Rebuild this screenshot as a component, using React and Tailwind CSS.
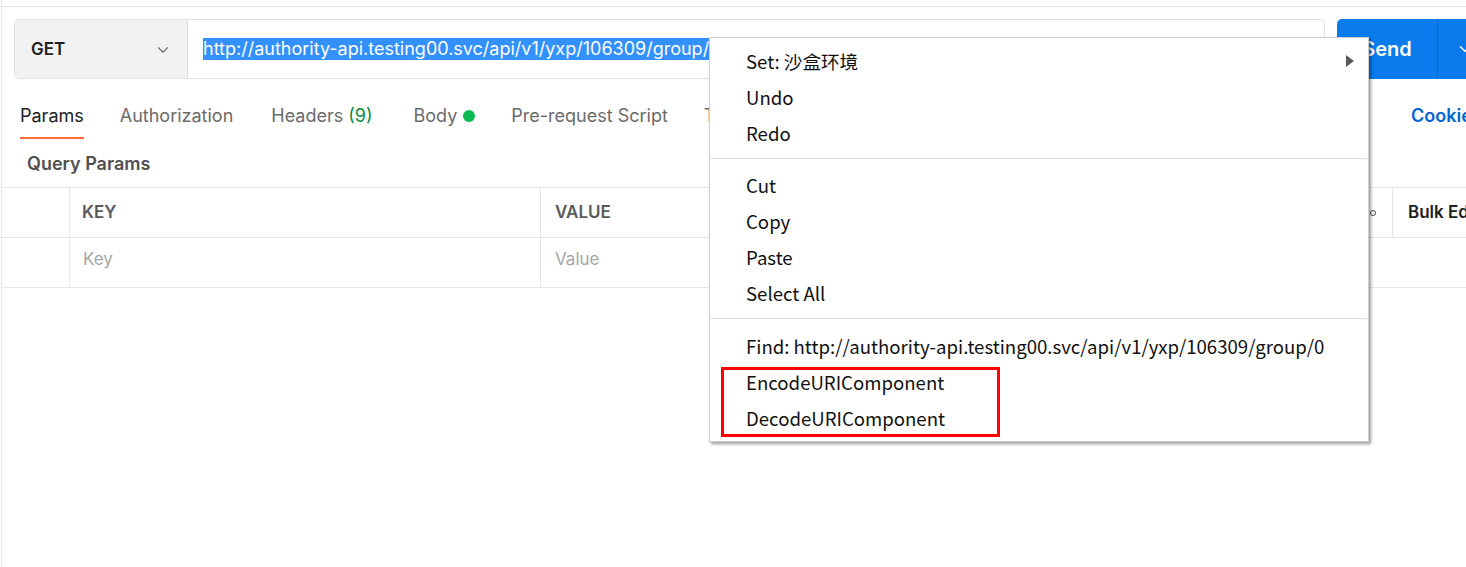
import React from 'react';
import { ChevronDown } from 'lucide-react';

const url = 'http://authority-api.testing00.svc/api/v1/yxp/106309/group/0';

const tabs = [
  { label: 'Params', active: true },
  { label: 'Authorization' },
  { label: 'Headers', count: '(9)', extra: 'ml-[2px]' },
  { label: 'Body', dot: true, extra: 'ml-[5px]' },
  { label: 'Pre-request Script' },
  { label: 'Tests' },
];

const menuGroups = [
  ['Set: 沙盒环境', 'Undo', 'Redo'],
  ['Cut', 'Copy', 'Paste', 'Select All'],
  ['Find: ' + url, 'EncodeURIComponent', 'DecodeURIComponent'],
];

const ContextMenu = () => (
  <div className="absolute left-[709px] top-[37px] w-[660px] bg-white border border-[#cfcfcf] shadow-[2px_2px_3px_rgba(0,0,0,0.4)] pt-[5px] pb-[5px] font-['Noto_Sans_CJK_SC',sans-serif] text-[18.6px] text-[#111]">
    {menuGroups.map((group, gi) => (
      <div key={gi}>
        {gi === 1 && <div className="mx-px mt-[7px] mb-[8px] h-px bg-[#dcdcdc]" />}
        {gi === 2 && <div className="mx-px mt-[7px] mb-[9px] h-px bg-[#dcdcdc]" />}
        {group.map((item, i) => (
          <div key={item} className="h-[36px] pl-[36px] pr-[14px] flex items-center justify-between whitespace-nowrap">
            <span>{item}</span>
            {gi === 0 && i === 0 && (
              <svg width="8" height="12" viewBox="0 0 8 12">
                <polygon points="0,0 8,6 0,12" fill="#5a5a5a" />
              </svg>
            )}
          </div>
        ))}
      </div>
    ))}
    {/* annotation box */}
    <div className="absolute left-[11px] top-[329px] w-[279px] h-[70px] border-[3px] border-[#ff0000]" />
  </div>
);

const App = () => {
  return (
    <div className="relative w-full h-[567px] overflow-hidden bg-white font-['Inter',sans-serif]">
      <div className="ml-px h-full border-l border-[#e6e6e6]">
        <div className="h-[6px]" />
        <div className="border-t border-[#e6e6e6]">
          {/* request bar */}
          <div className="pl-3 pt-3 flex items-stretch">
            <div className="w-[1311px] h-[60px] shrink-0 flex border border-[#e0e0e0] rounded-[5px]">
              <div className="w-[173px] shrink-0 bg-[#f2f2f2] border-r border-[#e0e0e0] rounded-l-[5px] flex items-center justify-between pl-[16px] pr-[15px] pt-px">
                <span className="text-[17px] font-semibold text-[#212121]">GET</span>
                <ChevronDown size={18} strokeWidth={1.5} className="text-[#6b6b6b]" />
              </div>
              <div className="flex-1 flex items-center pl-[15px] overflow-hidden whitespace-nowrap">
                <span className="bg-[#3390ff] text-white text-[18px] leading-[22px]">{url}</span>
              </div>
            </div>
            <div className="ml-[12px] h-[60px] shrink-0 flex bg-[#097bed] rounded-l-[5px]">
              <div className="w-[101px] border-r border-[#0a6cd0] flex items-center justify-center text-white text-[20px] font-semibold">
                Send
              </div>
              <div className="w-[44px] flex items-center pl-[18px] text-white">
                <ChevronDown size={18} strokeWidth={2} />
              </div>
            </div>
          </div>

          {/* tabs */}
          <div className="mt-[25px] pl-[18px] flex items-start">
            <div className="flex-1 flex gap-[36px]">
              {tabs.map(t => (
                <div
                  key={t.label}
                  className={
                    'leading-6 pb-[9px] border-b-2 text-[18px] whitespace-nowrap flex items-center ' +
                    (t.active ? 'border-[#ff6c37] text-[#212121]' : 'border-transparent text-[#6b6b6b]') +
                    (t.extra ? ' ' + t.extra : '')
                  }
                >
                  {t.label}
                  {t.count && <span className="ml-[5px] text-[#0b8a45]">{t.count}</span>}
                  {t.dot && <span className="ml-[6px] w-[12px] h-[12px] rounded-full bg-[#0cbb52]" />}
                </div>
              ))}
            </div>
            <div className="w-[55px] shrink-0 leading-6 text-[18px] font-semibold text-[#0265d2] whitespace-nowrap">Cookies</div>
          </div>

          <div className="mt-[13px] pl-[25px] leading-6 text-[18px] font-semibold text-[#505050]">Query Params</div>

          {/* params table */}
          <div className="mt-[11px] border-t border-[#e6e6e6]">
            <div className="flex h-[50px] border-b border-[#e6e6e6]">
              <div className="w-[68px] shrink-0 border-r border-[#e6e6e6]" />
              <div className="w-[471px] shrink-0 border-r border-[#e6e6e6] pl-[12px] flex items-center text-[17px] font-semibold text-[#5a5a5a]">KEY</div>
              <div className="flex-1 flex items-center justify-between pl-[14px] pr-[16px] text-[17px] font-semibold text-[#5a5a5a]">
                <span>VALUE</span>
                <span className="w-[6px] h-[6px] rounded-full border-[1.5px] border-[#444]" />
              </div>
              <div className="w-[74px] shrink-0 border-l border-[#e6e6e6] pl-[15px] flex items-center text-[17px] font-semibold text-[#212121] whitespace-nowrap overflow-hidden">
                Bulk Edit
              </div>
            </div>
            <div className="flex h-[50px] border-b border-[#e6e6e6]">
              <div className="w-[68px] shrink-0 border-r border-[#e6e6e6]" />
              <div className="w-[471px] shrink-0 border-r border-[#e6e6e6] pl-[13px] pb-[5px] flex items-center text-[17px] text-[#a6a6a6]">Key</div>
              <div className="flex-1 pl-[14px] pb-[5px] flex items-center text-[17px] text-[#a6a6a6]">Value</div>
            </div>
          </div>
        </div>
      </div>

      <ContextMenu />
    </div>
  );
};

export default App;
